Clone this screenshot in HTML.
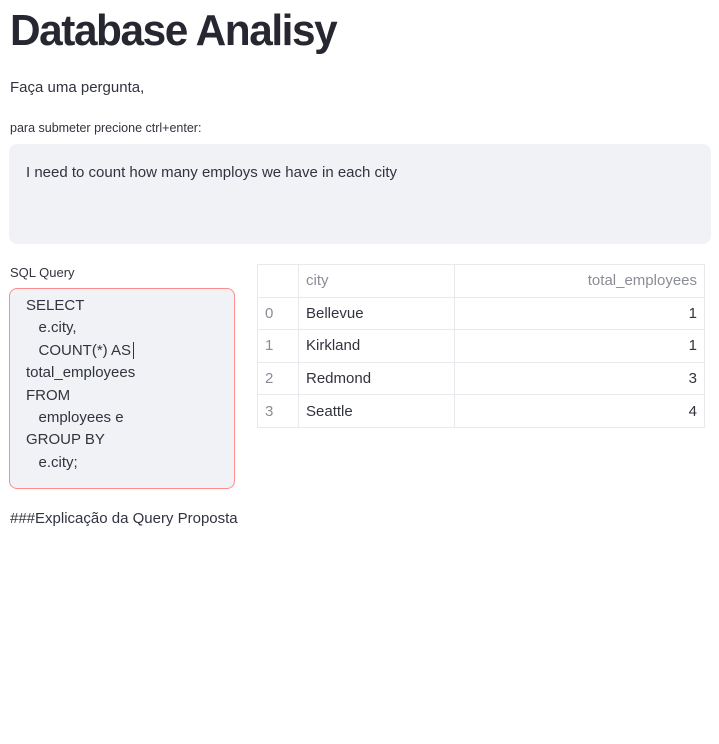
<!DOCTYPE html>
<html><head><meta charset="utf-8"><style>
*{margin:0;padding:0;box-sizing:border-box}
body{width:719px;height:744px;background:#fff;font-family:"Liberation Sans",sans-serif;color:#31333f;position:relative;overflow:hidden}
.a{position:absolute;white-space:nowrap}
h1{position:absolute;left:10px;top:6px;font-size:44px;font-weight:bold;letter-spacing:-1.5px;transform:scaleX(0.963);transform-origin:left;color:#262730}
.ta{position:absolute;left:9px;top:144px;width:702px;height:100px;background:#f0f2f6;border-radius:8px}
.sql{position:absolute;left:9px;top:288px;width:226px;height:201px;background:#f0f2f6;border:1px solid #ff8c8c;border-radius:8px;font-size:15px;line-height:22.4px;padding:6px 0 0 16px;white-space:pre}
table{position:absolute;left:257px;top:264px;width:448px;border-collapse:collapse;font-size:15px}
td{border:1px solid #e8e9ed;height:32.6px;padding:0 7px 0 7px}
td.i{color:#8b8d96;width:41px}
td.c{width:156px}
td.n{text-align:right}
tr.h td{color:#8b8d96}
</style></head><body>
<h1>Database Analisy</h1>
<div class="a" style="left:10px;top:79px;font-size:15px">Faça uma pergunta,</div>
<div class="a" style="left:10px;top:121px;font-size:12.5px">para submeter precione ctrl+enter:</div>
<div class="ta"><div class="a" style="left:17px;top:20px;font-size:15px">I need to count how many employs we have in each city</div></div>
<div class="a" style="left:10px;top:265px;font-size:13px">SQL Query</div>
<div class="sql">SELECT
   e.city,
   COUNT(*) AS<span style="border-left:1px solid #333;margin-left:2px"></span>
total_employees
FROM
   employees e
GROUP BY
   e.city;</div>
<table>
<tr class="h"><td class="i"></td><td class="c">city</td><td class="n">total_employees</td></tr>
<tr><td class="i">0</td><td>Bellevue</td><td class="n">1</td></tr>
<tr><td class="i">1</td><td>Kirkland</td><td class="n">1</td></tr>
<tr><td class="i">2</td><td>Redmond</td><td class="n">3</td></tr>
<tr><td class="i">3</td><td>Seattle</td><td class="n">4</td></tr>
</table>
<div class="a" style="left:10px;top:510px;font-size:15px">###Explicação da Query Proposta</div>
</body></html>
